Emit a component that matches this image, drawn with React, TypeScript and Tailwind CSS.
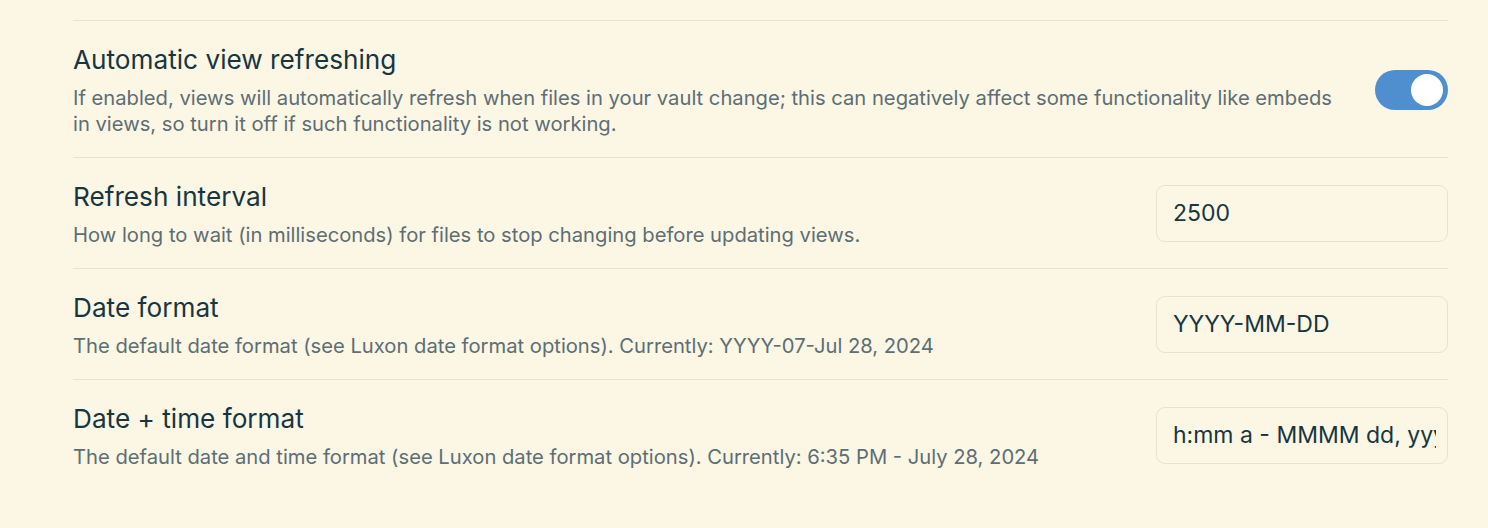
import React from "react";

const font = { fontFamily: "Inter, 'Noto Sans', sans-serif" };

function Row({ title, desc, children }: { title: string; desc: React.ReactNode; children: React.ReactNode }) {
  return (
    <div className="flex items-center border-t border-[#e9e2cd] pt-[21px] pb-[20px]">
      <div className="flex-1 mr-[24px]">
        <div className="text-[26.2px] leading-[35px] text-[#173641]">{title}</div>
        <div className="mt-[8px] text-[20.2px] leading-[26px] text-[#5d6e75]">{desc}</div>
      </div>
      {children}
    </div>
  );
}

function Input({ value }: { value: string }) {
  return (
    <div className="w-[292px] h-[57px] shrink-0 rounded-[9px] border border-[#e9e2cd] bg-[#fcf6e4] pl-[16px] pr-[11px] flex items-center">
      <div className="flex-1 overflow-hidden">
        <span className="text-[23px] text-[#173641] whitespace-nowrap">{value}</span>
      </div>
    </div>
  );
}

export default function App() {
  return (
    <div className="w-[1488px] h-[528px] bg-[#fcf6e4] pt-[20px] pl-[73px] pr-[40px]" style={font}>
      <Row
        title="Automatic view refreshing"
        desc="If enabled, views will automatically refresh when files in your vault change; this can negatively affect some functionality like embeds in views, so turn it off if such functionality is not working."
      >
        <div className="w-[73px] h-[40px] shrink-0 rounded-full bg-[#4f8fcf] flex items-center justify-end pr-[5px]">
          <div className="w-[32px] h-[32px] rounded-full bg-white" />
        </div>
      </Row>
      <Row title="Refresh interval" desc="How long to wait (in milliseconds) for files to stop changing before updating views.">
        <Input value="2500" />
      </Row>
      <Row title="Date format" desc="The default date format (see Luxon date format options). Currently: YYYY-07-Jul 28, 2024">
        <Input value="YYYY-MM-DD" />
      </Row>
      <Row title="Date + time format" desc="The default date and time format (see Luxon date format options). Currently: 6:35 PM - July 28, 2024">
        <Input value="h:mm a - MMMM dd, yyyy" />
      </Row>
    </div>
  );
}
